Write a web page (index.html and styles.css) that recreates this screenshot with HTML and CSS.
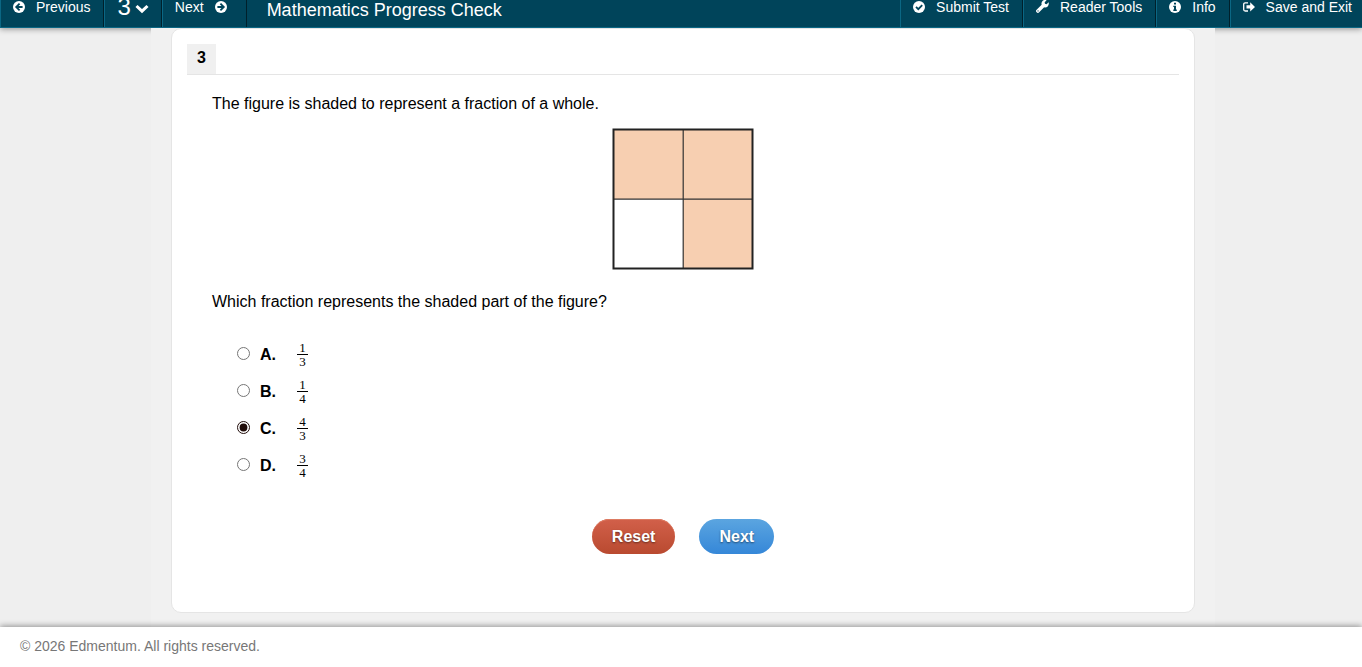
FILE: index.html
```html
<!DOCTYPE html>
<html lang="en">
<head>
    <meta charset="UTF-8">
    <meta name="viewport" content="width=device-width, initial-scale=1.0">
    <title>Mathematics Progress Check</title>
    <link rel="stylesheet" href="styles.css">
</head>
<body>
    <header class="toolbar">
        <button type="button" class="tool">
            <svg class="icon" viewBox="0 0 12 12"><circle cx="6" cy="6" r="6" fill="#fff"/><path d="M6.6 2.6 3.2 6l3.4 3.4M3.6 6h6" fill="none" stroke="#00445a" stroke-width="1.8"/></svg>
            Previous
        </button>
        <button type="button" class="tool tool-number">
            3
            <svg class="chevron" viewBox="0 0 14 10"><path d="m1.5 2 5.5 5.2L12.500 2" fill="none" stroke="#fff" stroke-width="3"/></svg>
        </button>
        <button type="button" class="tool tool-next">
            Next
            <svg class="icon" viewBox="0 0 12 12"><circle cx="6" cy="6" r="6" fill="#fff"/><path d="M5.400 2.600 8.800 6 5.400 9.400M8.400 6h-6" fill="none" stroke="#00445a" stroke-width="1.8"/></svg>
        </button>
        <h1 class="title">Mathematics Progress Check</h1>
        <button type="button" class="tool">
            <svg class="icon" viewBox="0 0 12 12"><circle cx="6" cy="6" r="6" fill="#fff"/><path d="m3 5.900 2.300 2.300L9.200 4.200" fill="none" stroke="#00445a" stroke-width="1.800"/></svg>
            Submit Test
        </button>
        <button type="button" class="tool">
            <svg class="icon icon-wrench" viewBox="0 0 12 12"><path d="M11.600 2.100 9.800 3.900 8.300 3.500 8 2 9.800.3C8.300-.3 6.600.1 5.700 1.300 5 2.200 4.900 3.300 5.200 4.300L.6 8.900a1.500 1.500 0 0 0 0 2.300 1.500 1.500 0 0 0 2.300.1L7.500 6.700c1.100.4 2.400.1 3.300-.8.900-1 1.300-2.400.8-3.800z" fill="#fff"/><circle cx="1.900" cy="10.100" r=".6" fill="#00445a"/></svg>
            Reader Tools
        </button>
        <button type="button" class="tool">
            <svg class="icon" viewBox="0 0 12 12"><circle cx="6" cy="6" r="6" fill="#fff"/><path d="M5 1.800h2v1.700H5zM4.300 4.700H7v3.900h.8V10H4.300V8.600H5V6h-.7z" fill="#00445a"/></svg>
            Info
        </button>
        <button type="button" class="tool tool-exit">
            <svg class="icon" viewBox="0 0 12 12"><path d="M5 1.800H2.200Q.7 1.800.7 3.300v5.200q0 1.500 1.500 1.500H5" fill="none" stroke="#fff" stroke-width="1.300"/><path d="M3.500 4.200h3.700V1.300L12 5.900 7.200 10.500V7.600H3.500z" fill="#fff"/></svg>
            Save and Exit
        </button>
    </header>

    <main class="page">
        <form class="card">
            <div class="question-bar">
                <span class="question-number">3</span>
            </div>
            <div class="question">
                <p>The figure is shaded to represent a fraction of a whole.</p>
                <svg class="figure" viewBox="0 0 142 142" role="img" aria-label="Square in four parts, three shaded">
                    <rect x="1.500" y="1.500" width="139" height="139" fill="#f7cfb1"/>
                    <rect x="1.500" y="71" width="69.500" height="69.500" fill="#fff"/>
                    <path d="M71.200 1v140M1 71.200h140" stroke="#333" stroke-width="1.200"/>
                    <rect x="1.500" y="1.500" width="139" height="139" fill="none" stroke="#222" stroke-width="2"/>
                </svg>
                <p>Which fraction represents the shaded part of the figure?</p>
                <div class="choices">
                    <label class="choice">
                        <input type="radio" name="answer" value="A">
                        <b class="letter">A.</b>
                        <span class="fraction"><span class="top">1</span><span>3</span></span>
                    </label>
                    <label class="choice">
                        <input type="radio" name="answer" value="B">
                        <b class="letter">B.</b>
                        <span class="fraction"><span class="top">1</span><span>4</span></span>
                    </label>
                    <label class="choice">
                        <input type="radio" name="answer" value="C" checked>
                        <b class="letter">C.</b>
                        <span class="fraction"><span class="top">4</span><span>3</span></span>
                    </label>
                    <label class="choice">
                        <input type="radio" name="answer" value="D">
                        <b class="letter">D.</b>
                        <span class="fraction"><span class="top">3</span><span>4</span></span>
                    </label>
                </div>
            </div>
            <div class="actions">
                <button type="reset" class="button button-reset">Reset</button>
                <button type="button" class="button button-next">Next</button>
            </div>
        </form>
    </main>

    <footer class="footer">© 2026 Edmentum. All rights reserved.</footer>
</body>
</html>
```

FILE: styles.css
```css
* {
    box-sizing: border-box;
}
body {
    display: flex;
    flex-direction: column;
    min-height: 100vh;
    margin: 0;
    background: #efefef;
    color: #000;
    font-family: "Liberation Sans", Arial, sans-serif;
    font-size: 16px;
    line-height: 20px;
}
button {
    font-family: inherit;
    cursor: pointer;
}

/* Toolbar, tucked partly above the top edge */
.toolbar {
    display: flex;
    height: 42px;
    margin-top: -14px;
    background: #00445a;
    border-bottom: 1px solid #0b6784;
    box-shadow: 0 1px 6px rgba(0, 0, 0, 0.4);
}
.tool {
    display: flex;
    align-items: center;
    gap: 11px;
    padding: 0 13px 0 12px;
    border: 0;
    border-left: 1px solid #0b6784;
    border-right: 1px solid #00202b;
    background: none;
    color: #fff;
    font-size: 14px;
    white-space: nowrap;
}
.tool-number {
    gap: 4px;
    padding: 0 12px;
    font-size: 24px;
}
.tool-next {
    padding-right: 19px;
}
.tool-exit {
    padding-right: 10px;
    border-right: 0;
}
.icon {
    width: 12px;
    height: 12px;
}
.icon-wrench {
    width: 13px;
    height: 13px;
}
.chevron {
    width: 14px;
    height: 10px;
    margin-top: 4px;
}
.title {
    flex: 1;
    margin: 0;
    padding: 4px 20px 0;
    color: #fff;
    font-size: 18px;
    font-weight: normal;
    line-height: 40px;
}

/* Question */
.page {
    position: relative;
    flex: 1;
    width: 100%;
    max-width: 1064px;
    margin-left: max(0px, calc(50% - 530px));
    padding: 0 20px 14px;
    background: #f1f1f1;
}
.card {
    min-height: 585px;
    padding: 15px;
    border: 1px solid #e5e5e5;
    border-radius: 10px;
    background: #fff;
}
.question-bar {
    display: flex;
    border-bottom: 1px solid #e5e5e5;
}
.question-number {
    padding: 4px 10px 6px;
    background: #f0f0f0;
    font-weight: bold;
}
.question {
    padding: 19px 25px 0;
}
.question p {
    margin: 0;
}
.figure {
    display: block;
    width: 142px;
    height: 142px;
    margin: 14px auto 22px;
}
.choices {
    padding: 24px 25px 0;
}
.choice {
    display: flex;
    align-items: center;
    height: 37px;
}
.choice input {
    width: 13px;
    height: 13px;
    margin: 0 10px 3px 0;
    accent-color: #210d0a;
}
.letter {
    width: 37px;
}
.fraction {
    display: flex;
    flex-direction: column;
    width: 11px;
    font-family: "Liberation Serif", serif;
    font-size: 13px;
    line-height: 13px;
    text-align: center;
}
.top {
    border-bottom: 1px solid #000;
}
.actions {
    display: flex;
    justify-content: center;
    gap: 24px;
    padding-top: 35px;
}
.button {
    height: 35px;
    padding: 0 20px;
    border: 0;
    border-radius: 18px;
    color: #fff;
    font-size: 16px;
    font-weight: bold;
    text-shadow: 0 1px 2px rgba(0, 0, 0, 0.5);
}
.button-reset {
    background: linear-gradient(#d2604a, #b94a30);
    box-shadow: inset 0 1px 0 #dd7b62;
}
.button-next {
    background: linear-gradient(#5ba5e0, #3587d8);
}

.footer {
    position: relative;
    height: 40px;
    padding: 0 20px;
    background: #fff;
    box-shadow: 0 -1px 6px rgba(0, 0, 0, 0.4);
    color: #777;
    font-size: 14px;
    line-height: 38px;
}
```
